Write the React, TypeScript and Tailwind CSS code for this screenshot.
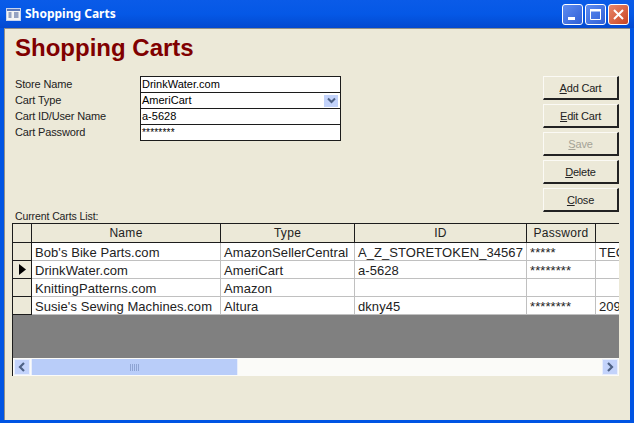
const font = "font-['Liberation_Sans',Arial,sans-serif]";

const fields = [
  { label: "Store Name", value: "DrinkWater.com" },
  { label: "Cart Type", value: "AmeriCart", combo: true },
  { label: "Cart ID/User Name", value: "a-5628" },
  { label: "Cart Password", value: "********", secret: true },
];

const buttons = [
  { key: "A", post: "dd Cart" },
  { key: "E", post: "dit Cart" },
  { key: "S", post: "ave", disabled: true },
  { key: "D", post: "elete" },
  { key: "C", post: "lose" },
];

const rows = [
  ["Bob's Bike Parts.com", "AmazonSellerCentral", "A_Z_STORETOKEN_34567", "*****", "TEC"],
  ["DrinkWater.com", "AmeriCart", "a-5628", "********", ""],
  ["KnittingPatterns.com", "Amazon", "", "", ""],
  ["Susie's Sewing Machines.com", "Altura", "dkny45", "********", "209"],
];

const colWidths = ["w-[189px]", "w-[134px]", "w-[172px]", "w-[69px]", "w-[23px]"];

function WinButton({ color, children }: { color: string; children: React.ReactNode }) {
  return (
    <div className={`w-[21px] h-[21px] rounded-[3px] border border-white flex items-center justify-center ${color}`}>
      <svg width="15" height="15" viewBox="0 0 15 15">{children}</svg>
    </div>
  );
}

function ScrollArrow({ dir }: { dir: "left" | "right" }) {
  return (
    <div className="w-[16px] h-[16px] bg-[#c3d3fb] border border-[#e8eefc] flex items-center justify-center">
      <svg width="10" height="10" viewBox="0 0 10 10">
        <path d={dir === "left" ? "M7 1 3 5l4 4" : "M3 1l4 4-4 4"} fill="none" stroke="#4d6185" strokeWidth="2.2" />
      </svg>
    </div>
  );
}

export default function App() {
  return (
    <div className={`${font} w-[634px] h-[423px] flex flex-col overflow-hidden bg-[#0054e3]`}>
      {/* title bar */}
      <div className="h-[28px] shrink-0 flex items-center pl-[6px] pr-[5px] bg-gradient-to-b from-[#0a5be8] via-[#0558e6] to-[#0349d0]">
        <svg width="15" height="13" viewBox="0 0 15 13" className="mr-[4px]">
          <rect x="0.5" y="0.5" width="14" height="12" fill="#f4f4f4" stroke="#c8d4ee" />
          <rect x="1" y="1" width="13" height="2" fill="#5c78b8" />
          <path d="M2.500 5h3M2.500 7h3M2.500 9h3M8 5h4.500M8 7h4.500M8 9h4.500" stroke="#37508e" strokeWidth="1" />
        </svg>
        <span className="text-[12px] font-bold text-white font-['Noto_Sans',sans-serif]">Shopping Carts</span>
        <div className="ml-auto flex gap-[2px]">
          <WinButton color="bg-gradient-to-br from-[#5f8cf0] to-[#2f5fd6]">
            <rect x="3" y="10" width="7" height="3" fill="#fff" />
          </WinButton>
          <WinButton color="bg-gradient-to-br from-[#5f8cf0] to-[#2f5fd6]">
            <path d="M2.500 3.500h10v9h-10z" fill="none" stroke="#fff" />
            <rect x="2" y="2" width="11" height="2.500" fill="#fff" />
          </WinButton>
          <WinButton color="bg-gradient-to-br from-[#e8876a] to-[#c9431f]">
            <path d="M3 3l9 9M12 3l-9 9" stroke="#fff" strokeWidth="2" />
          </WinButton>
        </div>
      </div>

      {/* client area */}
      <div className="h-[392px] shrink-0 mx-[4px] border-t-[1px] border-l-[1px] border-[#8f8f8a] bg-[#ece9d8] pl-[7px] pr-[10px]">
        <h1 className="text-[24px] leading-[28px] font-bold text-[#800000] mt-[5px] ml-[3px]">Shopping Carts</h1>

        <div className="flex mt-[14px] ml-[3px]">
          <div className="w-[125px] text-[11px] leading-[16px] text-[#222]">
            {fields.map((f) => (
              <div key={f.label} className="h-[16px] tracking-[-0.15px]">{f.label}</div>
            ))}
          </div>
          <div className="w-[201px] h-[65px] border border-[#1c1c1c] bg-white">
            {fields.map((f, i) => (
              <div key={f.label} className={`h-[16px] flex items-center pl-[1px] text-[11px] leading-[15px] text-black ${i < 3 ? "border-b border-[#1c1c1c]" : ""}`}>
                <span className={f.secret ? "text-[10px] -mt-[2px] tracking-[0.2px]" : ""}>{f.value}</span>
                {f.combo && (
                  <div className="ml-auto mr-[2px] w-[14px] h-[12px] bg-[#c3d3fb] flex items-center justify-center">
                    <svg width="9" height="7" viewBox="0 0 9 7">
                      <path d="M1 1.500 4.500 5 8 1.500" fill="none" stroke="#4d6185" strokeWidth="2" />
                    </svg>
                  </div>
                )}
              </div>
            ))}
          </div>

          <div className="ml-[202px] w-[76px] flex flex-col gap-[4px]">
            {buttons.map((b) => (
              <div
                key={b.key}
                className={`h-[24px] pt-[1px] flex items-center justify-center text-[11px] tracking-[-0.2px] border-t border-l border-t-[#fbfaf5] border-l-[#fbfaf5] border-r-2 border-b-2 border-r-[#222] border-b-[#222] ${b.disabled ? "text-[#a5a396]" : "text-[#222]"}`}
              >
                <span>
                  <span className="underline">{b.key}</span>
                  {b.post}
                </span>
              </div>
            ))}
          </div>
        </div>

        <div className="text-[10.500px] leading-[12px] text-[#222] mt-[-2px] ml-[3px] tracking-[-0.1px]">Current Carts List:</div>

        {/* data grid */}
        <div className="mt-[1px] w-[607px] border-t-[1px] border-l-[1px] border-[#1c1c1c] overflow-hidden">
          <div className="flex h-[19px] text-[12px] leading-[18px] text-[#222] bg-[#ece9d8] border-b border-[#1c1c1c]">
            <div className="w-[19px] shrink-0 border-r border-[#1c1c1c]" />
            {["Name", "Type", "ID", "Password", ""].map((h, i) => (
              <div key={i} className={`${colWidths[i]} shrink-0 text-center tracking-[0.3px] ${i < 4 ? "border-r border-[#1c1c1c]" : ""}`}>{h}</div>
            ))}
          </div>
          {rows.map((r, ri) => (
            <div key={ri} className="flex h-[18px] text-[13px] leading-[17px] text-[#222] bg-white">
              <div className="w-[19px] shrink-0 bg-[#ece9d8] border-r border-b border-[#1c1c1c] flex items-center justify-center">
                {ri === 1 && (
                  <svg width="7" height="11" viewBox="0 0 7 11">
                    <path d="M0 0l7 5.500L0 11z" fill="#000" />
                  </svg>
                )}
              </div>
              {r.map((c, i) => (
                <div key={i} className={`${colWidths[i]} shrink-0 pl-[3px] pt-[1px] whitespace-nowrap overflow-hidden tracking-[0.07px] border-b border-[#c0c0c0] ${i < 4 ? "border-r" : ""} border-r-[#c0c0c0]`}>
                  {c}
                </div>
              ))}
            </div>
          ))}
          <div className="h-[43px] bg-[#808080]" />
          <div className="h-[18px] bg-[#fbfbf8] flex items-center pl-[1px] pr-[1px]">
            <ScrollArrow dir="left" />
            <div className="ml-[1px] w-[207px] h-[16px] bg-[#b9cdf9] border-x border-[#e8eefc] flex items-center justify-center gap-[1px]">
              {[0, 1, 2, 3, 4].map((n) => (
                <div key={n} className="w-[1px] h-[7px] bg-[#8ea4d4]" />
              ))}
            </div>
            <div className="ml-auto">
              <ScrollArrow dir="right" />
            </div>
          </div>
        </div>
      </div>
    </div>
  );
}
